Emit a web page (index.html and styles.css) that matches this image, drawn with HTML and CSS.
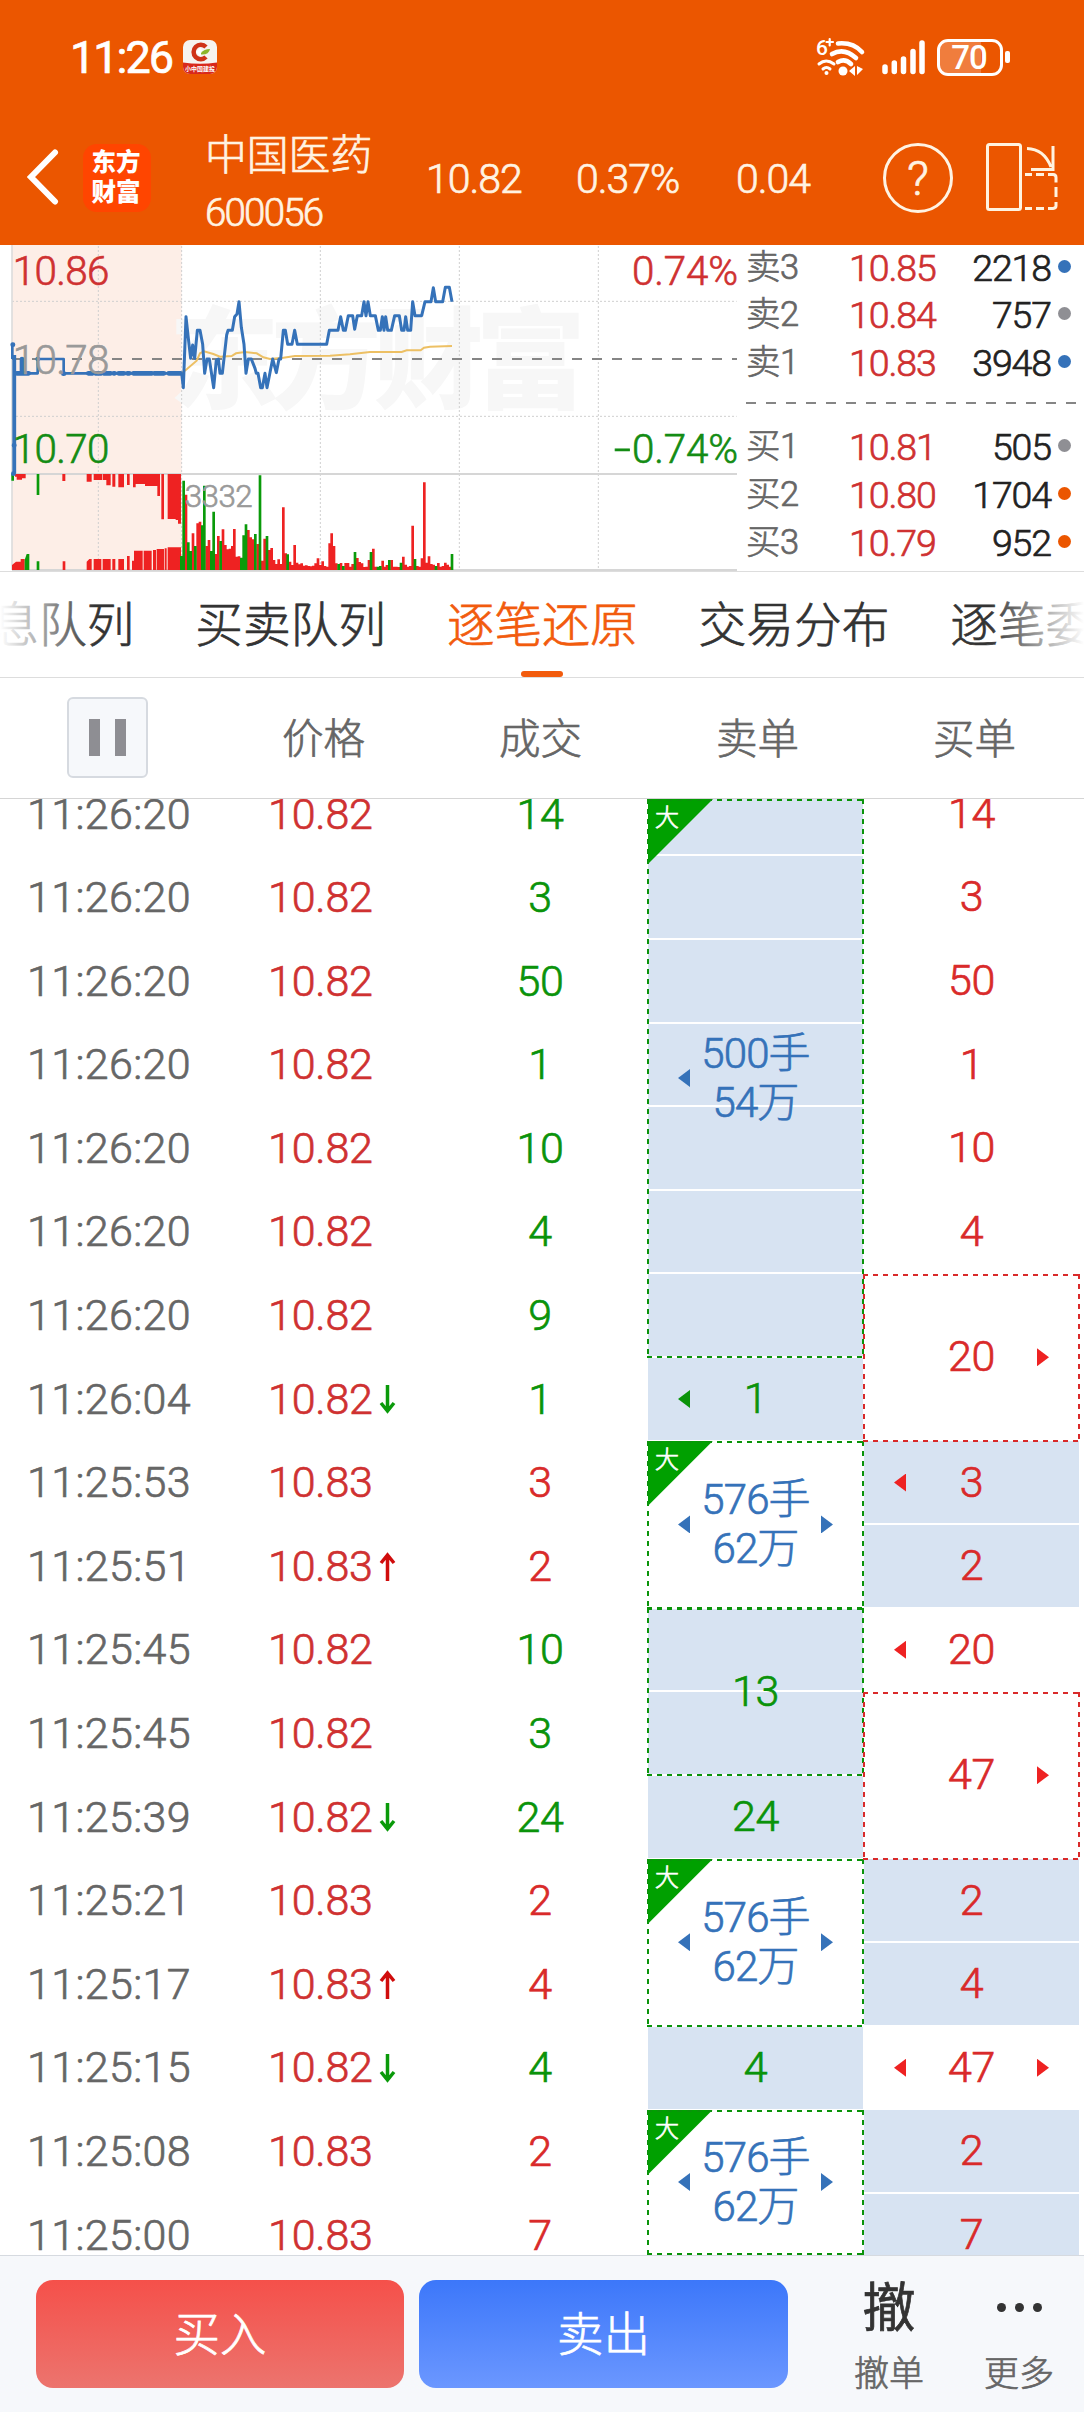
FILE: index.html
```
<!DOCTYPE html>
<html lang="zh-CN">
<head>
<meta charset="utf-8">
<title>中国医药 600056</title>
<link rel="stylesheet" href="styles.css">
</head>
<body>
<header class="header">
  <div class="status">
    <span class="clock">11:26</span>
    <svg class="app-badge" width="34" height="34" viewBox="0 0 34 34">
      <rect width="34" height="34" rx="7" fill="#f6f3f0"/>
      <path d="M0 22.5Q17 25 34 22.5V27a7 7 0 0 1-7 7H7a7 7 0 0 1-7-7Z" fill="#d8281c"/>
      <path d="M23 7A7.200 7.200 0 1 0 23 17" fill="none" stroke="#cf3218" stroke-width="4.500"/>
      <path d="M17 8l4 4-4 4-4-4Z" fill="#fff"/>
      <path d="M18 13q3-4 9-4-1 6-9 5.500Z" fill="#8db52a"/>
      <text x="17" y="31" class="badge-text">小中国建投</text>
    </svg>
    <div class="status-icons">
      <svg class="wifi" width="50" height="38" viewBox="0 0 50 38" fill="none" stroke="#fff" stroke-width="4.600" stroke-linecap="round">
        <path d="M22 5.500Q37 4 46 14M16 16Q28 9 40 20M22 24Q29 20 35 26"/>
        <path d="M3 26Q10 20 18 26M7 31Q10.500 28 14 31" stroke-width="3"/>
        <circle cx="10.500" cy="35" r="2" fill="#fff" stroke="none"/>
        <circle cx="27" cy="33" r="4.500" fill="#fff" stroke="none"/>
        <path d="M39 28v10l-6-5ZM41 28v9l6-6Z" fill="#fff" stroke="none"/>
        <path d="M10.500 4H17M13.700 1v6.500" stroke-width="2.200"/>
        <text x="0" y="17" class="wifi-gen">6</text>
      </svg>
      <svg class="signal" width="44" height="36" viewBox="0 0 44 36" stroke="#fff" stroke-width="5.500" stroke-linecap="round">
        <path d="M3 28v4.500M12.300 24v8.500M21.500 20v12.500M31 12.500v20M40 4v28.500"/>
      </svg>
      <div class="battery"><span>70</span></div>
      <i class="battery-tip"></i>
    </div>
  </div>
  <div class="titlebar">
    <svg class="back" width="32" height="56" viewBox="0 0 32 56"><path d="M28 3.500L4 28l24 24.500" fill="none" stroke="#fff" stroke-width="6" stroke-linecap="round"/></svg>
    <div class="logo"><span>东方</span><span>财富</span></div>
    <div class="stock"><div class="stock-name">中国医药</div><div class="stock-code">600056</div></div>
    <span class="quote q-price">10.82</span>
    <span class="quote q-pct">0.37%</span>
    <span class="quote q-chg">0.04</span>
    <div class="help">?</div>
    <svg class="rotate" width="76" height="72" viewBox="0 0 76 72" fill="none" stroke="#fff3e0" stroke-width="3">
      <rect x="3.500" y="3.500" width="33" height="65" rx="2"/>
      <path d="M43 7.500Q60 8 67 26M69 5v23.500H47"/>
      <path d="M41 33.500h7M52 33.500h8M64 33.500h5q3 0 3 3v5M72 46v10M72 61v4q0 2-3 2.500h-5M60 67.500h-8M48 67.500h-7"/>
    </svg>
  </div>
</header>

<section class="market">
  <svg class="chart" width="739" height="326" viewBox="0 15 2217 978" preserveAspectRatio="none">
    <rect x="36" y="15" width="509" height="976" fill="#fdeee7"/>
    <text class="watermark" x="507" y="480" textLength="1250">东方财富</text>
    <g fill="none" stroke="#cfcfcf" stroke-width="3" stroke-dasharray="6 6">
      <path d="M295 18V990M545 18V990M961 18V990M1378 18V990M1795 18V990M36 184H2210M36 529H2210"/>
    </g>
    <path d="M36 15V990" stroke="#ddd" stroke-width="5"/>
    <path d="M36 702H2211M36 990H2211" stroke="#d6d6d6" stroke-width="6"/>
    <path d="M36 357H2211" stroke="#858585" stroke-width="6" stroke-dasharray="30 30"/>
    <path fill="#ee2222" d="M45 702H77V715H66V719H50V710H45ZM187 702H196V723H187ZM260 702H275V725H260ZM281 702H306V720H281ZM308 702H319V720H308ZM319 702H332V736H319ZM337 702H346V740H337ZM355 702H372V742H355ZM381 702H389V735H381ZM399 702H407V742H399ZM407 702H435V732H407ZM435 702H465V738H435ZM465 702H480V768H472V738H465ZM484 702H492V838H484ZM503 702H543V851H534V840H527V837H503Z"/>
    <path fill="#ee2222" d="M36 990V975L48 965H62V957H74V990ZM188 964H196V990H188ZM260 990V965L268 957H275V990ZM281 957H304V990H281ZM308 957H332V990H308ZM337 957H346V990H337ZM355 957H372V990H355ZM381 948H389V990H381ZM396 962H402V932H428V990H396ZM431 932H455V990H431ZM459 930H468V990H459ZM470 927H492V990H470ZM494 925H500V990H494ZM503 922H543V990H503Z"/>
    <path fill="#0a9a0a" d="M34 702H42V722H34ZM110 702H118V765H110ZM74 990V960L80 942H88V990ZM110 964H118V990H110Z"/>
    <path stroke="#ee2222" stroke-width="8" d="M558 990V764M579 990V880M593 990V850M600 990V845M620 990V918M627 990V900M648 990V942M655 990V888M669 990V868M676 990V915M683 990V928M690 990V926M697 990V918M703 990V867M710 990V950M717 990V949M745 990V870M752 990V892M759 990V898M773 990V912M787 990V962M794 990V896M808 990V930M815 990V924M822 990V960M829 990V972M836 990V958M843 990V972M850 990V802M857 990V940M870 990V965M877 990V975M884 990V915M891 990V968M898 990V973M905 990V970M912 990V977M919 990V976M926 990V978M933 990V979M940 990V977M947 990V970M954 990V955M961 990V975M968 990V964M975 990V978M982 990V980M989 990V910M995 990V880M1002 990V918M1009 990V970M1023 990V969M1037 990V969M1044 990V969M1051 990V980M1058 990V972M1072 990V954M1079 990V966M1086 990V970M1093 990V981M1100 990V980M1107 990V960M1120 990V926M1127 990V980M1148 990V962M1155 990V980M1161 990V975M1175 990V960M1182 990V980M1189 990V980M1196 990V981M1210 990V950M1217 990V974M1224 990V980M1231 990V978M1238 990V857M1252 990V978M1259 990V980M1266 990V955M1273 990V727M1280 990V968M1287 990V949M1294 990V972M1301 990V974M1315 990V969M1322 990V980M1329 990V978M1336 990V968M1343 990V974M1350 990V980"/>
    <path stroke="#0a9a0a" stroke-width="8" d="M544 990V948M551 990V722M565 990V907M572 990V933M586 990V918M607 990V856M613 990V737M634 990V933M641 990V815M662 990V903M724 990V953M731 990V886M738 990V853M766 990V882M780 990V706M801 990V888M863 990V943M1016 990V972M1030 990V978M1065 990V936M1113 990V936M1134 990V980M1141 990V978M1168 990V960M1203 990V968M1245 990V957M1308 990V978M1356 990V942"/>
    <path fill="none" stroke="#edc064" stroke-width="6" d="M545 400L560 388 590 362 600 340 612 334 640 342 660 350 695 348 708 340 735 336 770 340 790 352 810 357 850 353 885 348 990 347 1050 343 1110 336H1205L1220 331H1262L1272 323 1290 320 1356 318"/>
    <g fill="none" stroke="#3572b9" stroke-linejoin="round">
      <path stroke-width="8" d="M37 313V357M42 357V702M42 400H113V357H191V400H545"/>
      <path stroke-width="11" d="M43 345V700"/>
      <path stroke-width="14" stroke-linecap="round" d="M38 314H39M42 616H43M40 701H41M50 400H86M66 357V400M113 357H114M190 401H192M265 400H278M286 400H304M311 400H332M341 400H344M356 400H372M382 400H388M400 400H456M463 400H492M506 400H542"/>
      <path stroke-width="9" d="M545 400L550 443 558 230 567 313 572 355 578 315 584 355 592 271H600L608 313 614 400 621 357H628L641 443 649 360 655 357 660 400H667L680 285 684 271H697L704 230 711 222 717 185 724 262 732 313 738 400 745 357H754L765 385 769 400H774L782 443H787L795 400 801 443 818 357 829 398 837 357H842L850 271H856L863 313H876L884 271 892 313H980L988 271H1014L1022 230 1030 271H1036L1045 227H1058L1064 268 1072 227H1085L1092 185 1098 227 1104 185 1111 227H1126L1135 271H1141L1147 230 1152 271 1157 230 1163 271H1174L1184 227H1198L1205 271H1212L1217 230 1223 271H1232L1238 185 1245 227H1265L1275 185H1293L1300 143 1307 185H1328L1336 142H1348L1356 185"/>
    </g>
    <g class="axis">
      <text x="38" y="134" class="up-text" textLength="290">10.86</text>
      <text x="38" y="401" class="mid-text" textLength="290">10.78</text>
      <text x="38" y="669" class="down-text" textLength="290">10.70</text>
      <text x="1896" y="134" class="up-text" textLength="318">0.74%</text>
      <text x="1896" y="669" class="down-text" textLength="318">0.74%</text>
      <text x="1841" y="669" class="down-text" textLength="52" lengthAdjust="spacingAndGlyphs">-</text>
      <text x="554" y="800" class="mid-text vol" textLength="204">3332</text>
    </g>
  </svg>
  <div class="book">
    <div class="level"><span>卖3</span><b>10.85</b><em>2218</em><i class="blue"></i></div>
    <div class="level"><span>卖2</span><b>10.84</b><em>757</em><i></i></div>
    <div class="level"><span>卖1</span><b>10.83</b><em>3948</em><i class="blue"></i></div>
    <div class="book-split"></div>
    <div class="level"><span>买1</span><b>10.81</b><em>505</em><i></i></div>
    <div class="level"><span>买2</span><b>10.80</b><em>1704</em><i class="orange"></i></div>
    <div class="level"><span>买3</span><b>10.79</b><em>952</em><i class="orange"></i></div>
  </div>
</section>

<nav class="tabs">
  <span>信息队列</span><span>买卖队列</span><span class="active">逐笔还原</span><span>交易分布</span><span>逐笔委托</span>
</nav>

<div class="columns">
  <div class="pause"><i></i><i></i></div>
  <span>价格</span><span>成交</span><span>卖单</span><span>买单</span>
</div>

<main class="ticks">
  <div class="rows">
    <div class="row"><span>11:26:20</span><b>10.82</b><em class="g">14</em></div>
    <div class="row"><span>11:26:20</span><b>10.82</b><em class="g">3</em></div>
    <div class="row"><span>11:26:20</span><b>10.82</b><em class="g">50</em></div>
    <div class="row"><span>11:26:20</span><b>10.82</b><em class="g">1</em></div>
    <div class="row"><span>11:26:20</span><b>10.82</b><em class="g">10</em></div>
    <div class="row"><span>11:26:20</span><b>10.82</b><em class="g">4</em></div>
    <div class="row"><span>11:26:20</span><b>10.82</b><em class="g">9</em></div>
    <div class="row"><span>11:26:04</span><b>10.82<svg class="move down" viewBox="0 0 17 29"><path d="M8.500 0v25M2 18l6.500 8 6.500-8"/></svg></b><em class="g">1</em></div>
    <div class="row"><span>11:25:53</span><b>10.83</b><em class="r">3</em></div>
    <div class="row"><span>11:25:51</span><b>10.83<svg class="move up" viewBox="0 0 17 29"><path d="M8.500 29V4M2 11l6.500-8 6.500 8"/></svg></b><em class="r">2</em></div>
    <div class="row"><span>11:25:45</span><b>10.82</b><em class="g">10</em></div>
    <div class="row"><span>11:25:45</span><b>10.82</b><em class="g">3</em></div>
    <div class="row"><span>11:25:39</span><b>10.82<svg class="move down" viewBox="0 0 17 29"><path d="M8.500 0v25M2 18l6.500 8 6.500-8"/></svg></b><em class="g">24</em></div>
    <div class="row"><span>11:25:21</span><b>10.83</b><em class="r">2</em></div>
    <div class="row"><span>11:25:17</span><b>10.83<svg class="move up" viewBox="0 0 17 29"><path d="M8.500 29V4M2 11l6.500-8 6.500 8"/></svg></b><em class="r">4</em></div>
    <div class="row"><span>11:25:15</span><b>10.82<svg class="move down" viewBox="0 0 17 29"><path d="M8.500 0v25M2 18l6.500 8 6.500-8"/></svg></b><em class="g">4</em></div>
    <div class="row"><span>11:25:08</span><b>10.83</b><em class="r">2</em></div>
    <div class="row"><span>11:25:00</span><b>10.83</b><em class="r">7</em></div>
  </div>
  <div class="orders sell">
    <div class="cell first fill frame big"><u class="tag">大</u><i class="left"></i><p>500手<br>54万</p></div>
    <div class="cell fill"><i class="left"></i><p>1</p></div>
    <div class="cell two frame big"><u class="tag">大</u><i class="left"></i><p>576手<br>62万</p><i class="right"></i></div>
    <div class="cell two fill frame"><p>13</p></div>
    <div class="cell fill"><p>24</p></div>
    <div class="cell two frame big"><u class="tag">大</u><i class="left"></i><p>576手<br>62万</p><i class="right"></i></div>
    <div class="cell fill"><p>4</p></div>
    <div class="cell last frame big"><u class="tag">大</u><i class="left"></i><p>576手<br>62万</p><i class="right"></i></div>
  </div>
  <div class="orders buy">
    <div class="cell"><p>14</p></div>
    <div class="cell"><p>3</p></div>
    <div class="cell"><p>50</p></div>
    <div class="cell"><p>1</p></div>
    <div class="cell"><p>10</p></div>
    <div class="cell"><p>4</p></div>
    <div class="cell two frame"><p>20</p><i class="right"></i></div>
    <div class="cell fill"><i class="left"></i><p>3</p></div>
    <div class="cell fill"><p>2</p></div>
    <div class="cell"><i class="left"></i><p>20</p></div>
    <div class="cell two frame"><p>47</p><i class="right"></i></div>
    <div class="cell fill"><p>2</p></div>
    <div class="cell fill"><p>4</p></div>
    <div class="cell"><i class="left"></i><p>47</p><i class="right"></i></div>
    <div class="cell fill"><p>2</p></div>
    <div class="cell fill"><p>7</p></div>
  </div>
</main>

<footer class="footer">
  <div class="btn btn-buy">买入</div>
  <div class="btn btn-sell">卖出</div>
  <div class="tool tool-cancel"><span class="glyph">撤</span><span>撤单</span></div>
  <div class="tool tool-more"><span class="dots"><i></i><i></i><i></i></span><span>更多</span></div>
</footer>
</body>
</html>
```
FILE: styles.css
```
* { box-sizing: border-box; margin: 0; padding: 0; }
b, em, i, u { font-weight: inherit; font-style: normal; text-decoration: none; }
body {
  width: 1084px; height: 2412px; overflow: hidden; background: #fff;
  display: flex; flex-direction: column;
  font-family: Roboto, "Noto Sans CJK SC", sans-serif; font-weight: 300; color: #333;
  -webkit-text-stroke: .7px currentColor;
  --row: 83.6px; --green: #0a930a; --red: #d92a2a;
}

/* header */
.header { height: 245px; background: #eb5600; color: #fff; flex: none; }
.status { height: 110px; padding: 4px 74px 0 70px; display: flex; align-items: center; }
.clock { font-size: 45px; font-weight: 400; letter-spacing: -2px; width: 113px; }
.badge-text { font: 700 6px "Noto Sans CJK SC"; fill: #fff; text-anchor: middle; -webkit-text-stroke: 0; }
.status-icons { margin-left: auto; display: flex; align-items: center; }
.wifi { overflow: visible; margin-right: 1px; }
.wifi-gen { font: 500 21px Roboto; fill: #fff; stroke: none; -webkit-text-stroke: 0; }
.signal { margin-left: 15px; }
.battery {
  width: 66px; height: 37px; margin-left: 11px; border: 3px solid #fff; border-radius: 11px;
  background: linear-gradient(90deg, #f07d3d 68%, transparent 68%);
  font-size: 33px; font-weight: 500; line-height: 32px; text-align: center; letter-spacing: -1px;
  -webkit-text-stroke: 0;
}
.battery span { margin-left: -2px; }
.battery-tip { width: 5px; height: 12px; margin-left: 2px; background: #fff; border-radius: 2px; }
.titlebar { height: 135px; display: flex; padding-left: 27px; color: #fff3e2; }
.back { margin-top: 39px; }
.logo {
  width: 68px; height: 68px; margin: 34px 0 0 24px; border-radius: 14px; background: #ff4500; color: #fff;
  font-size: 24.500px; font-weight: 900; line-height: 30px; padding: 4px 2px 0 0;
  display: flex; flex-direction: column; align-items: center; -webkit-text-stroke: 0;
}
.stock { width: 222px; padding: 18px 0 0 54px; }
.stock-name { font-size: 41.8px; line-height: 56px; white-space: nowrap; }
.stock-code { font-size: 38.500px; line-height: 48px; margin-top: 5px; letter-spacing: -1.8px; }
.quote { font-size: 41px; line-height: 50px; margin-top: 44px; letter-spacing: -1px; }
.q-price { width: 150px; padding-left: 53px; box-sizing: content-box; }
.q-pct { width: 160px; }
.q-chg { width: 147px; }
.help {
  width: 70px; height: 70px; margin-top: 33px; border: 3px solid #fff3e2; border-radius: 50%;
  text-align: center; font-size: 48px; line-height: 66px; flex: none;
}
.rotate { margin: 31px 0 0 31px; flex: none; }

/* chart and order book */
.market { height: 327px; border-bottom: 1px solid #ddd; display: flex; flex: none; }
.chart { flex: none; }
.axis { font: 300 121px Roboto; stroke-width: 2; -webkit-text-stroke: 0; }
.up-text { fill: #cf3131; stroke: #cf3131; }
.mid-text { fill: #999; stroke: #999; }
.down-text { fill: #148c14; stroke: #148c14; }
.axis .vol { font-size: 94px; }
.watermark { font: 900 330px "Noto Sans CJK SC"; fill: #f7f7f7; -webkit-text-stroke: 0; }
.book { flex: 1; display: flex; flex-direction: column; }
.level {
  height: 48px; display: grid; grid-template-columns: 100px 94px 115px 1fr; align-items: center;
  padding-left: 7px; font-size: 37.5px; letter-spacing: -1.1px; line-height: 48px;
}
.level:first-child { height: 46px; line-height: 46px; }
.level span { color: #666; font-size: 34.500px; letter-spacing: -.5px; margin-top: -2px; }
.level span, .level em { white-space: nowrap; }
.level b { color: #cf3131; margin-left: 3px; }
.level em { color: #222; text-align: right; padding-right: 4px; }
.level i { width: 13px; height: 13px; margin: -4px 0 0 3px; border-radius: 50%; background: #8f8f94; }
.level i.blue { background: #3572b9; }
.level i.orange { background: #eb5600; }
.book-split {
  height: 2px; margin: 15px 7px 19px 7px;
  background: repeating-linear-gradient(90deg, #858585 0 10px, transparent 10px 20px);
}

/* tabs */
.tabs {
  height: 106px; border-bottom: 1px solid #ddd; display: flex; flex: none; gap: 59.700px;
  overflow: hidden; font-size: 47.700px; line-height: 109px; white-space: nowrap;
  position: relative;
}
.tabs span { flex: none; width: 192px; }
.tabs span:first-child { margin-left: -56.500px; }
.tabs::before, .tabs::after { content: ""; position: absolute; top: 0; width: 95px; height: 104px; z-index: 1; }
.tabs::before { left: 0; background: linear-gradient(90deg, #fff, #fff0); }
.tabs::after { right: 0; background: linear-gradient(270deg, #fff, #fff0); }
.tabs .active { color: #f25b0d; position: relative; }
.tabs .active::after {
  content: ""; position: absolute; left: 74px; bottom: 0; width: 42px; height: 6px;
  background: #f25b0d; border-radius: 3px;
}

/* column captions */
.columns {
  height: 121px; border-bottom: 1px solid #d5d5d5; display: grid; flex: none;
  grid-template-columns: 215px repeat(4, 217px); align-items: center; text-align: center;
  font-size: 41.5px; color: #666;
}
.columns span { margin-top: -5px; }
.pause {
  width: 81px; height: 81px; margin: -2px 0 0 67px; border: 2px solid #d6dae0; border-radius: 6px;
  background: #f6f8fb; display: flex; justify-content: center; align-items: center; gap: 15px;
}
.pause i { width: 11px; height: 37px; background: #8e8e93; }

/* tick list */
.ticks { height: 1456px; display: flex; flex: none; overflow: hidden; font-size: 43px; letter-spacing: -.4px; }
.rows { width: 648px; margin-top: -26.500px; flex: none; }
.row { height: var(--row); line-height: var(--row); display: grid; grid-template-columns: 241px 190px 1fr; padding-left: 27px; }
.row span { color: #666; letter-spacing: .35px; }
.row b { color: #cf3131; display: flex; align-items: center; letter-spacing: -.2px; }
.row em { text-align: center; width: 164px; }
.g, .sell { color: var(--green); }
.r, .buy { color: var(--red); }
.move { width: 17px; height: 29px; margin-left: 6px; fill: none; stroke-width: 3.500; overflow: visible; }
.down { stroke: #0a9a0a; }
.up { stroke: #d00c0c; }
.orders { width: 215px; flex: none; display: flex; flex-direction: column; }
.buy { margin-left: 1px; margin-top: -27px; }
.cell {
  height: var(--row); flex: none; position: relative; padding: 0 30px;
  display: grid; grid-template-columns: 12px 1fr 12px; align-items: center;
  --ink: currentColor;
}
.cell p { grid-column: 2; grid-row: 1; text-align: center; line-height: 49px; white-space: nowrap; justify-self: center; z-index: 1; }
.orders .cell p { margin-top: -1px; }
.two { height: calc(var(--row) * 2); }
.first { height: 558.200px; }
.last { height: 145px; }
.fill {
  background: repeating-linear-gradient(0deg, #fff 0 1px, #d7e3f2 1px 82.600px, #fff 82.600px 83.600px);
}
.big p { color: #3572b9; font-size: 42px; letter-spacing: -.9px; }
.frame::after {
  content: ""; position: absolute; inset: 0 -1px -1px -1px; z-index: 2;
  background:
    repeating-linear-gradient(90deg, var(--ink) 0 5px, transparent 5px 10px) 0 0 / 100% 2px no-repeat,
    repeating-linear-gradient(90deg, var(--ink) 0 5px, transparent 5px 10px) 0 100% / 100% 2px no-repeat,
    repeating-linear-gradient(180deg, var(--ink) 0 5px, transparent 5px 10px) 0 0 / 2px 100% no-repeat,
    repeating-linear-gradient(180deg, var(--ink) 0 5px, transparent 5px 10px) 100% 0 / 2px 100% no-repeat;
}
.last::after { bottom: 0; }
.left, .right { width: 12px; height: 18px; background: currentColor; grid-row: 1; }
.left { grid-column: 1; clip-path: polygon(0 50%, 100% 0, 100% 100%); }
.right { grid-column: 3; clip-path: polygon(100% 50%, 0 0, 0 100%); }
.big .left, .big .right { background: #3572b9; }
.buy .left, .buy .right { background: #ee2222; }
.tag {
  position: absolute; left: 0; top: 0; width: 65px; height: 65px; background: #00a000;
  clip-path: polygon(0 0, 100% 0, 0 100%); color: #fff; font-size: 24px; line-height: 38px; padding-left: 7px;
}

/* footer */
.footer {
  height: 157px; border-top: 1px solid #d6dae0; background: #f6f8fb; display: flex; flex: none;
  padding: 24px 0 0 36px; font-size: 35px; color: #666;
}
.btn { width: 368px; height: 108px; border-radius: 17px; color: #fff; font-size: 46.500px; line-height: 110px; text-align: center; }
.btn-buy { background: linear-gradient(#f5504a, #ec746e); }
.btn-sell { width: 369px; margin-left: 15px; background: linear-gradient(#3c77fa, #6b97ff); }
.tool { display: flex; flex-direction: column; align-items: center; width: 72px; line-height: 50px; white-space: nowrap; }
.tool-cancel { margin-left: 65px; }
.tool-more { margin-left: 58px; }
.glyph { font-size: 53px; font-weight: 400; color: #333; line-height: 54px; height: 68px; margin-top: 2px; }
.dots { height: 70px; display: flex; gap: 9px; align-items: flex-start; padding-top: 23px; }
.dots i { width: 9px; height: 9px; border-radius: 50%; background: #333; }
```
